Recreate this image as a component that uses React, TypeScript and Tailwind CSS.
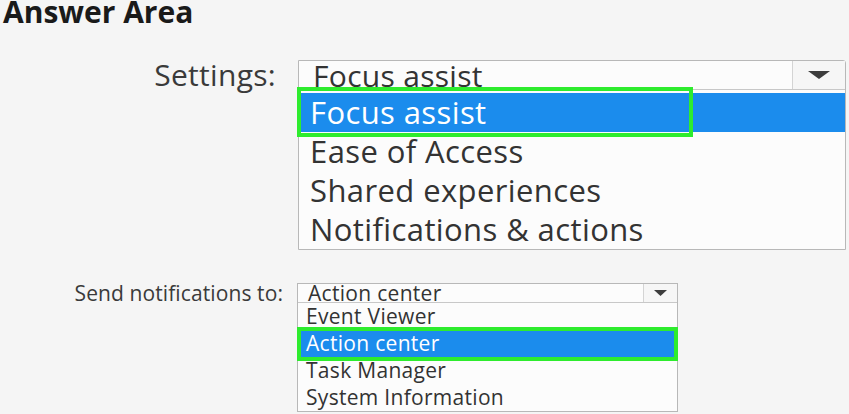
import React from "react";

const topOptions = ["Focus assist", "Ease of Access", "Shared experiences", "Notifications & actions"];
const bottomOptions = ["Event Viewer", "Action center", "Task Manager", "System Information"];

function Arrow({ className }: { className: string }) {
  return (
    <svg className={className} viewBox="0 0 22 8" preserveAspectRatio="none">
      <polygon points="0,0 22,0 11,8" fill="#3c3c3c" />
    </svg>
  );
}

export default function App() {
  return (
    <div className="relative h-[414px] w-[849px] overflow-hidden bg-[#f5f5f5] font-['Open_Sans',sans-serif] text-[#333]">
      <h1 className="pl-[3px] text-[30px] font-bold leading-[24px] text-[#1a1a1a]">Answer Area</h1>

      {/* Settings */}
      <div className="mt-[36px] flex">
        <div className="w-[298px] pr-[22px] text-right text-[30px] leading-[30px] tracking-[0.3px] text-[#3a3a3a]">
          Settings:
        </div>
        <div className="w-[548px] rounded-tr-[3px] border border-[#b8b8b8] bg-[#fcfcfc]">
          <div className="flex h-[29px] border-b border-[#c8c8c8]">
            <div className="flex-1 pl-[14px] text-[30px] leading-[29px] tracking-[0.3px]">Focus assist</div>
            <div className="flex w-[53px] items-center justify-center border-l border-[#d4d4d4] bg-[#f6f6f6]">
              <Arrow className="h-[8px] w-[22px]" />
            </div>
          </div>
          <div className="pt-[3px]">
            {topOptions.map((opt, i) => (
              <div
                key={opt}
                className={`relative h-[39px] pl-[11px] text-[31px] leading-[38px] tracking-[0.4px] ${
                  i === 0 ? "bg-[#1b8ced] text-white" : ""
                }`}
              >
                {opt}
                {i === 0 && (
                  <div className="absolute -left-[2px] -top-[6px] h-[50px] w-[396px] border-[4px] border-[#2eec2e]" />
                )}
              </div>
            ))}
          </div>
        </div>
      </div>

      {/* Send notifications */}
      <div className="mt-[33px] flex">
        <div className="w-[297px] pr-[14px] text-right text-[21px] leading-[20px] tracking-[0.1px] text-[#3a3a3a]">
          Send notifications to:
        </div>
        <div className="w-[381px] border border-[#b8b8b8] bg-[#fcfcfc]">
          <div className="flex h-[19px] border-b border-[#c8c8c8]">
            <div className="flex-1 pl-[10px] text-[21px] leading-[19px] tracking-[0.3px]">Action center</div>
            <div className="flex w-[34px] items-center justify-center border-l border-[#d4d4d4] bg-[#f6f6f6]">
              <Arrow className="h-[6px] w-[13px]" />
            </div>
          </div>
          {bottomOptions.map((opt, i) => (
            <div
              key={opt}
              className={`relative h-[27px] pl-[8px] text-[21px] leading-[26px] tracking-[0.3px] ${
                i === 1 ? "bg-[#1b8ced] text-white" : ""
              }`}
            >
              {opt}
              {i === 1 && (
                <div className="absolute -left-[1px] -right-[1px] -top-[3px] h-[34px] border-[4px] border-[#2eec2e]" />
              )}
            </div>
          ))}
        </div>
      </div>
    </div>
  );
}
